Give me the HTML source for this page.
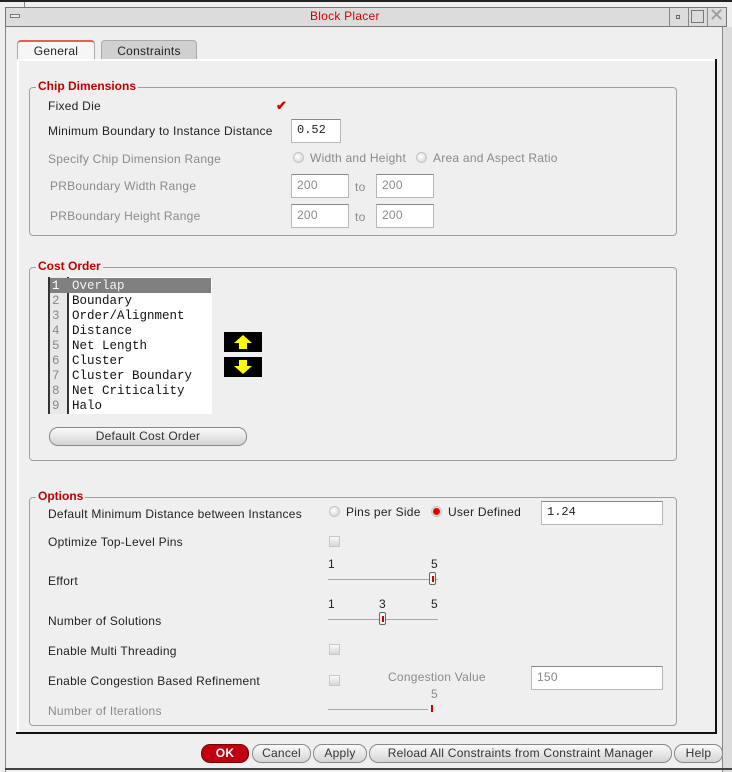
<!DOCTYPE html><html><head><style>
*{box-sizing:border-box}
body{margin:0;width:732px;height:772px;background:#efefef;font-family:"Liberation Sans",sans-serif;font-size:12px;color:#222;position:relative;overflow:hidden;letter-spacing:0.25px}
.a{position:absolute;white-space:nowrap}
.g{color:#8a8a8a}
.box{position:absolute;border:1px solid #a0a0a0;border-radius:4px}
.lg{position:absolute;background:#efefef;color:#c00000;font-weight:bold;padding:0 2px;font-size:12px;letter-spacing:0}
.in{position:absolute;background:#fff;border:1px solid #b8b8b8;border-top-color:#888;height:24px;padding:3px 0 0 5px;font-size:12px}
.mono{font-family:"Liberation Mono",monospace;letter-spacing:0}
.cb{position:absolute;width:11px;height:11px;background:linear-gradient(#fafafa,#d6d6d6);border:1px solid #c8c8c8}
.rd{position:absolute;width:11px;height:11px;border-radius:50%;background:radial-gradient(circle at 40% 40%,#fff,#cfcfcf);border:1px solid #c4c4c4}
.btn{position:absolute;height:19px;border:1px solid #888;border-radius:9px;background:linear-gradient(#fafafa,#d4d4d4);text-align:center;line-height:17px;font-size:12px;color:#333}
.track{position:absolute;height:1px;background:#a8a8a8}
.thumb{position:absolute;width:7px;height:13px;border:1px solid #666;border-radius:2px;background:#f4f4f4}
.thumb:after{content:"";position:absolute;left:2px;top:3px;width:2px;height:6px;background:#c00}
</style></head><body>
<div class="a" style="left:0;top:0;width:732px;height:2px;background:#222"></div>
<div class="a" style="left:24px;top:2px;width:1px;height:24px;background:#888"></div>
<div class="a" style="left:5px;top:7px;width:722px;height:20px;background:#dcdcdc;border:1px solid #777"></div>
<div class="a" style="left:10px;top:14px;width:10px;height:4px;border:1px solid #777;background:#eee"></div>
<div class="a" style="left:310px;top:9px;color:#d00000;font-size:12px">Block Placer</div>
<div class="a" style="left:669px;top:8px;width:1px;height:18px;background:#888"></div>
<div class="a" style="left:676px;top:15px;width:4px;height:4px;border:1px solid #666"></div>
<div class="a" style="left:688px;top:8px;width:1px;height:18px;background:#888"></div>
<div class="a" style="left:691px;top:10px;width:13px;height:13px;border:1px solid #777"></div>
<div class="a" style="left:707px;top:8px;width:1px;height:18px;background:#888"></div>
<div class="a" style="left:709px;top:6px;color:#999;font-size:18px;line-height:18px">✕</div>
<div class="a" style="left:5px;top:27px;width:1px;height:745px;background:#888"></div>
<div class="a" style="left:722px;top:27px;width:10px;height:745px;background:#dcdcdc;border-left:1px solid #888"></div>
<div class="a" style="left:5px;top:768px;width:727px;height:2px;background:#444"></div>
<div class="a" style="left:17px;top:40px;width:78px;height:20px;background:#f6f6f6;border:1px solid #aaa;border-top:2px solid #e06060;border-bottom:none;border-radius:4px 4px 0 0;text-align:center;line-height:18px">General</div>
<div class="a" style="left:101px;top:40px;width:96px;height:19px;background:#d0d0d0;border:1px solid #aaa;border-bottom:none;border-radius:4px 4px 0 0;text-align:center;line-height:20px">Constraints</div>
<div class="a" style="left:17px;top:59px;width:699px;height:2px;background:#fff"></div>
<div class="a" style="left:17px;top:59px;width:2px;height:675px;background:#fff"></div>
<div class="a" style="left:715px;top:59px;width:2px;height:675px;background:#111"></div>
<div class="a" style="left:16px;top:732px;width:701px;height:2px;background:#111"></div>
<div class="box" style="left:29px;top:87px;width:648px;height:149px"></div>
<div class="lg" style="left:36px;top:79px">Chip Dimensions</div>
<div class="a" style="left:48px;top:99px">Fixed Die</div>
<div class="a" style="left:276px;top:98px;color:#c00;font-size:13px;font-weight:bold">✔</div>
<div class="a" style="left:48px;top:124px">Minimum Boundary to Instance Distance</div>
<div class="in mono" style="left:291px;top:119px;width:50px">0.52</div>
<div class="a g" style="left:48px;top:152px">Specify Chip Dimension Range</div>
<div class="rd" style="left:293px;top:152px"></div>
<div class="a g" style="left:310px;top:151px">Width and Height</div>
<div class="rd" style="left:416px;top:152px"></div>
<div class="a g" style="left:433px;top:151px">Area and Aspect Ratio</div>
<div class="a g" style="left:50px;top:179px">PRBoundary Width Range</div>
<div class="in g" style="left:291px;top:174px;width:58px">200</div>
<div class="a g" style="left:355px;top:180px">to</div>
<div class="in g" style="left:376px;top:174px;width:58px">200</div>
<div class="a g" style="left:50px;top:209px">PRBoundary Height Range</div>
<div class="in g" style="left:291px;top:204px;width:58px">200</div>
<div class="a g" style="left:355px;top:210px">to</div>
<div class="in g" style="left:376px;top:204px;width:58px">200</div>
<div class="box" style="left:29px;top:267px;width:648px;height:194px"></div>
<div class="lg" style="left:36px;top:259px">Cost Order</div>
<div class="a" style="left:48px;top:277px;width:164px;height:137px;background:#fff;border-left:2px solid #333"></div>
<div class="a" style="left:50px;top:277px;width:19px;height:137px;background:#e8e8e8;border-right:2px solid #333"></div>
<div class="a" style="left:50px;top:278px;width:161px;height:15px;background:#808080"></div>
<div class="a mono" style="left:52px;top:279px;line-height:15px;font-size:12.5px;color:#888">1<br>2<br>3<br>4<br>5<br>6<br>7<br>8<br>9</div>
<div class="a mono" style="left:52px;top:279px;line-height:15px;font-size:12.5px;color:#fff">1</div>
<div class="a mono" style="left:72px;top:279px;line-height:15px;font-size:12.5px;color:#111">Overlap<br>Boundary<br>Order/Alignment<br>Distance<br>Net Length<br>Cluster<br>Cluster Boundary<br>Net Criticality<br>Halo</div>
<div class="a mono" style="left:72px;top:279px;line-height:15px;font-size:12.5px;color:#fff">Overlap</div>
<div class="a" style="left:224px;top:332px;width:38px;height:20px;background:#000"><svg width="38" height="20"><path d="M19 3 L28 11 L23 11 L23 17 L15 17 L15 11 L10 11Z" fill="#ff0"/></svg></div>
<div class="a" style="left:224px;top:357px;width:38px;height:20px;background:#000"><svg width="38" height="20"><path d="M19 17 L28 9 L23 9 L23 3 L15 3 L15 9 L10 9Z" fill="#ff0"/></svg></div>
<div class="btn" style="left:49px;top:427px;width:198px">Default Cost Order</div>
<div class="box" style="left:29px;top:497px;width:648px;height:229px"></div>
<div class="lg" style="left:36px;top:489px">Options</div>
<div class="a" style="left:48px;top:507px">Default Minimum Distance between Instances</div>
<div class="rd" style="left:329px;top:506px"></div>
<div class="a" style="left:346px;top:505px">Pins per Side</div>
<div class="rd" style="left:431px;top:506px;background:radial-gradient(circle,#d00 0,#d00 3px,#eee 4px)"></div>
<div class="a" style="left:448px;top:505px">User Defined</div>
<div class="in mono" style="left:541px;top:501px;width:122px">1.24</div>
<div class="a" style="left:48px;top:535px">Optimize Top-Level Pins</div>
<div class="cb" style="left:329px;top:536px"></div>
<div class="a" style="left:328px;top:557px">1</div><div class="a" style="left:431px;top:557px">5</div>
<div class="track" style="left:328px;top:579px;width:110px"></div>
<div class="thumb" style="left:429px;top:572px"></div>
<div class="a" style="left:48px;top:574px">Effort</div>
<div class="a" style="left:328px;top:597px">1</div><div class="a" style="left:379px;top:597px">3</div><div class="a" style="left:431px;top:597px">5</div>
<div class="track" style="left:328px;top:619px;width:110px"></div>
<div class="thumb" style="left:379px;top:612px"></div>
<div class="a" style="left:48px;top:614px">Number of Solutions</div>
<div class="a" style="left:48px;top:644px">Enable Multi Threading</div>
<div class="cb" style="left:329px;top:644px"></div>
<div class="a" style="left:48px;top:674px">Enable Congestion Based Refinement</div>
<div class="cb" style="left:329px;top:675px"></div>
<div class="a g" style="left:388px;top:670px">Congestion Value</div>
<div class="in g" style="left:531px;top:666px;width:132px">150</div>
<div class="a g" style="left:431px;top:687px">5</div>
<div class="track" style="left:328px;top:709px;width:100px"></div>
<div class="a" style="left:431px;top:705px;width:2px;height:7px;background:#c00"></div>
<div class="a g" style="left:48px;top:704px">Number of Iterations</div>
<div class="btn" style="left:201px;top:744px;width:48px;background:#c00010;border-color:#700;color:#fff;font-weight:bold">OK</div>
<div class="btn" style="left:252px;top:744px;width:59px">Cancel</div>
<div class="btn" style="left:313px;top:744px;width:54px">Apply</div>
<div class="btn" style="left:369px;top:744px;width:303px">Reload All Constraints from Constraint Manager</div>
<div class="btn" style="left:674px;top:744px;width:49px">Help</div>
</body></html>
